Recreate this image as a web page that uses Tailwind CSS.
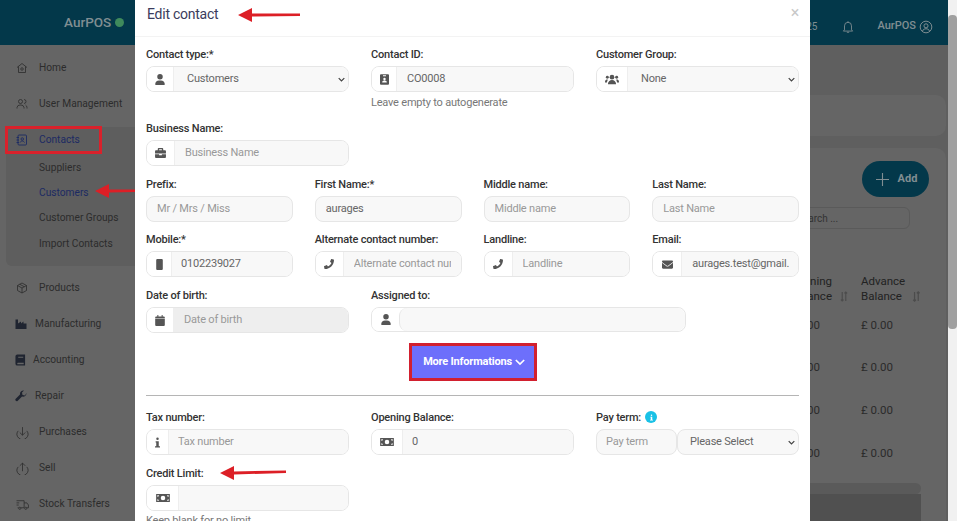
<!DOCTYPE html>
<html>
<head>
<meta charset="utf-8">
<script src="https://cdn.jsdelivr.net/npm/@tailwindcss/browser@4"></script>
</head>
<body class="overflow-hidden">
<div class="relative w-[957px] h-[521px] overflow-hidden bg-[#5f5f5f] text-[#2b2b2b] text-[11px] [font-family:Roboto,sans-serif]">
  <div class="flex h-full">
    <!-- page behind the backdrop -->
    <div class="w-[948px] flex flex-col h-full">
      <header class="h-[45px] shrink-0 bg-[#03384a] flex items-center text-[#808e92]">
        <div class="w-[135px] flex items-center pl-[64px] gap-[4px] text-[13.500px] font-medium">AurPOS<span class="w-[9px] h-[9px] rounded-full bg-[#3f8a5c]"></span></div>
        <div class="flex-1 flex items-center justify-end pt-[8px]">
          <span class="text-[10px] mr-[23px]">25</span>
          <svg viewBox="0 0 24 24" class="w-[14px] h-[14px] mr-[23px] fill-none stroke-[#808e92] stroke-[1.5]"><path d="M6 17V10a6 6 0 0 1 12 0v7l2 2H4zM10 21h4M12 2v2"/></svg>
          <span class="font-medium">AurPOS</span>
          <svg viewBox="0 0 24 24" class="w-[14px] h-[14px] ml-[3px] mr-[15px] fill-none stroke-[#808e92] stroke-[1.7]"><circle cx="12" cy="12" r="10"/><circle cx="12" cy="10" r="3.500"/><path d="M6 19c1-3 3.500-4 6-4s5 1 6 4"/></svg>
        </div>
      </header>
      <div class="flex flex-1 min-h-0">
        <!-- sidebar -->
        <aside class="w-[135px] shrink-0 bg-[#656565] pt-[5px] text-[10.200px] text-[#2c2c2c]">
          <div class="h-[36px] flex items-center pl-[16px] gap-[11px]">
            <svg viewBox="0 0 24 24" class="w-[12px] h-[12px] fill-none stroke-[#2c2c2c] stroke-[1.6]"><path d="M2 11 12 3l10 8M5 9v12h14V9"/><circle cx="12" cy="14" r="2.500"/></svg>Home</div>
          <div class="h-[36px] flex items-center pl-[16px] gap-[11px]">
            <svg viewBox="0 0 24 24" class="w-[12px] h-[12px] fill-none stroke-[#2c2c2c] stroke-[1.6]"><circle cx="9" cy="7" r="4"/><path d="M2 21v-2a6 6 0 0 1 6-5h2a6 6 0 0 1 6 5v2M16 3a4 4 0 0 1 0 8M19 14a6 6 0 0 1 3 5v2"/></svg>User Management</div>
          <div class="relative h-[148px]">
            <div class="absolute left-[6px] right-0 top-[5px] bottom-[4px] rounded-l-[6px] bg-[#5e5e5e]"></div>
            <div class="relative h-[36px] flex items-center pl-[16px] gap-[11px] text-[#1c2a63]">
              <svg viewBox="0 0 24 24" class="w-[12px] h-[12px] fill-none stroke-[#1c2a63] stroke-[1.8]"><rect x="4" y="2" width="17" height="20" rx="2"/><circle cx="12.500" cy="10" r="2.500"/><path d="M8 17c1-2 3-3 4.500-3s3.500 1 4.500 3M1 7h5M1 12h5M1 17h5"/></svg>Contacts</div>
            <div class="relative pl-[39px] flex flex-col">
              <div class="h-[25px] -mt-[3px] flex items-center">Suppliers</div>
              <div class="h-[25px] flex items-center text-[#1c2a63]">Customers</div>
              <div class="h-[26px] flex items-center">Customer Groups</div>
              <div class="h-[25px] flex items-center">Import Contacts</div>
            </div>
          </div>
          <div class="h-[36px] flex items-center pl-[16px] gap-[11px]">
            <svg viewBox="0 0 24 24" class="w-[12px] h-[12px] fill-none stroke-[#2c2c2c] stroke-[1.6]"><path d="M12 2 21 7v10l-9 5-9-5V7zM3 7l9 5 9-5M12 12v10M7.500 4.500l9 5"/></svg>Products</div>
          <div class="h-[36px] flex items-center pl-[15px] gap-[8px]">
            <svg viewBox="0 0 24 24" class="w-[12px] h-[12px] fill-[#1f2430]"><path d="M1 3h5v8l6-4v4l5-4v4h6v11H1z"/></svg>Manufacturing</div>
          <div class="h-[36px] flex items-center pl-[15px] gap-[7px]">
            <svg viewBox="0 0 24 24" class="w-[11px] h-[12px] fill-[#1f2430]"><path d="M5 0h17v24H5a4 4 0 0 1-4-4V4a4 4 0 0 1 4-4zm2 5v2h11V5zm-2 14v2h14v-3H6a1 1 0 0 0-1 1z"/></svg>Accounting</div>
          <div class="h-[36px] flex items-center pl-[15px] gap-[8px]">
            <svg viewBox="0 0 24 24" class="w-[12px] h-[12px] fill-[#1f2430]"><path d="M23 6a7 7 0 0 1-9 7L5 22a3 3 0 0 1-4-4l9-9a7 7 0 0 1 8-8l-4 4 1 5 5 1z"/></svg>Repair</div>
          <div class="h-[36px] flex items-center pl-[16px] gap-[10px]">
            <svg viewBox="0 0 24 24" class="w-[13px] h-[13px] fill-none stroke-[#2c2c2c] stroke-[1.5]"><path d="M12 2v15M7 12l5 5 5-5M4 9a10 10 0 1 0 16 0"/></svg>Purchases</div>
          <div class="h-[36px] flex items-center pl-[16px] gap-[10px]">
            <svg viewBox="0 0 24 24" class="w-[13px] h-[13px] fill-none stroke-[#2c2c2c] stroke-[1.5]"><path d="M12 17V2M7 7l5-5 5 5M4 9a10 10 0 1 0 16 0"/></svg>Sell</div>
          <div class="h-[36px] flex items-center pl-[16px] gap-[10px]">
            <svg viewBox="0 0 24 24" class="w-[13px] h-[13px] fill-none stroke-[#2c2c2c] stroke-[1.4]"><path d="M1 5h14v13H9M1 9h5M1 13h4M15 9h5l3 4v5h-3M3 18h2"/><circle cx="7" cy="19" r="2"/><circle cx="18" cy="19" r="2"/></svg>Stock Transfers</div>
        </aside>
        <!-- main content, right end is what shows past the dialog -->
        <main class="flex-1 min-w-0 flex flex-col pr-[2px] pt-[50px]">
          <div class="shrink-0 h-[41px] rounded-[10px] bg-[#656565]"></div>
          <div class="shrink-0 mt-[12px] rounded-t-[10px] bg-[#656565] h-[400px] flex flex-col items-end pt-[13px]">
            <button class="shrink-0 mr-[17px] w-[67px] h-[36px] rounded-full bg-[#03384a] text-[#808e92] font-bold flex items-center justify-center gap-[9px] pl-[2px]">
              <svg viewBox="0 0 14 14" class="w-[13px] h-[13px] fill-none stroke-[#808e92] stroke-[1.2]"><path d="M7 0v14M0 7h14"/></svg>Add</button>
            <div class="shrink-0 mt-[10px] mr-[36px] w-[300px] h-[22px] rounded-[6px] border border-[#5a5a5a] flex items-center text-[#333] text-[10px] pl-[186px]">Search ...</div>
            <div class="shrink-0 w-[300px] mr-[25px] mt-[45px] text-[11.500px] text-[#222]">
              <div class="grid grid-cols-[1fr_60px] h-[34px] leading-[15px]">
                <div class="flex justify-end items-end pr-[13px] gap-[8px] pb-[4px]">
                  <div class="text-right">Opening<br>Balance</div>
                  <svg viewBox="0 0 9 12" class="w-[8px] h-[11px] mb-[2px] fill-none stroke-[#4c4c4c] stroke-[1.3]"><path d="M2.500 1v10M1 9.500l1.500 1.500L4 9.500M6.500 11V1M5 2.500 6.500 1 8 2.500"/></svg>
                </div>
                <div class="flex items-end gap-[7px] pb-[4px]">
                  <div>Advance<br>Balance</div>
                  <svg viewBox="0 0 9 12" class="w-[9px] h-[11px] mb-[2px] fill-none stroke-[#4c4c4c] stroke-[1.3]"><path d="M2.500 1v10M1 9.500l1.500 1.500L4 9.500M6.500 11V1M5 2.500 6.500 1 8 2.500"/></svg>
                </div>
              </div>
              <div class="grid grid-cols-[1fr_60px] h-[42px] pt-[10px] leading-[14px] text-[#2b2b2b]"><span class="text-right pr-[41px]">£ 0.00</span><span>£ 0.00</span></div>
              <div class="grid grid-cols-[1fr_60px] h-[43px] pt-[10px] leading-[14px] text-[#2b2b2b]"><span class="text-right pr-[41px]">£ 0.00</span><span>£ 0.00</span></div>
              <div class="grid grid-cols-[1fr_60px] h-[43px] pt-[10px] leading-[14px] text-[#2b2b2b]"><span class="text-right pr-[41px]">£ 0.00</span><span>£ 0.00</span></div>
              <div class="grid grid-cols-[1fr_60px] h-[47px] pt-[10px] leading-[14px] text-[#2b2b2b]"><span class="text-right pr-[41px]">£ 0.00</span><span>£ 0.00</span></div>
              <div class="h-[11px] rounded-full bg-[#5a5a5a]"></div>
              <div class="h-[40px] bg-[#505050]"></div>
            </div>
          </div>
        </main>
      </div>
    </div>
    <!-- page scrollbar -->
    <div class="w-[9px] h-full bg-[#f1f1f1] pt-[15px]">
      <div class="h-[314px] rounded-[4px] bg-[#a0a0a0]"></div>
    </div>
  </div>

  <!-- dialog -->
  <div class="absolute left-[135px] top-0 w-[675px] h-full overflow-hidden bg-white text-[#333] tracking-[-0.2px] flex flex-col">
    <div class="h-[37px] shrink-0 border-b border-[#f3f3f3] pl-[12px] pr-[11px] flex items-center justify-between pb-[11px] pt-[4px]">
      <h2 class="text-[14px] tracking-[-0.25px] text-[#3b3b5c]">Edit contact</h2>
      <span class="text-[16px] leading-none text-[#c8c8c8] -mt-[4px]">×</span>
    </div>
    <div class="pl-[11px] pr-[11px] pt-[9px] font-normal">
      <!-- row 1 -->
      <div class="grid grid-cols-3 gap-x-[22px]">
        <div>
          <label class="block h-[16px] mt-[1px] mb-[3px] leading-[16px] font-medium">Contact type:*</label>
          <div class="relative flex h-[26px] rounded-[8px] border border-[#e6e6e6] overflow-hidden">
            <span class="w-[27px] flex items-center justify-center border-r border-[#eee] bg-white">
              <svg viewBox="0 0 448 512" class="w-[10px] h-[11px] fill-[#555]"><path d="M224 256A128 128 0 1 0 224 0a128 128 0 1 0 0 256zm-45.700 48C79.800 304 0 383.800 0 482.300C0 498.700 13.300 512 29.700 512H418.300c16.400 0 29.700-13.300 29.700-29.700C448 383.800 368.200 304 269.700 304H178.300z"/></svg>
            </span>
            <select class="flex-1 min-w-0 appearance-none bg-[#f8f8f8] text-[#666] pl-[13px] text-[11px] outline-none"><option>Customers</option></select>
            <svg viewBox="0 0 10 6" class="absolute right-[3px] top-[10px] w-[7px] h-[5px] fill-none stroke-[#444] stroke-[1.800] pointer-events-none"><path d="M1 1l4 4 4-4"/></svg>
          </div>
        </div>
        <div>
          <label class="block h-[16px] mt-[1px] mb-[3px] leading-[16px] font-medium">Contact ID:</label>
          <div class="flex h-[26px] rounded-[8px] border border-[#e6e6e6] overflow-hidden">
            <span class="w-[25px] flex items-center justify-center border-r border-[#eee] bg-white">
              <svg viewBox="0 0 448 512" class="w-[9px] h-[11px] fill-[#555]"><path fill-rule="evenodd" d="M48 0h352a48 48 0 0 1 48 48v416a48 48 0 0 1-48 48H48a48 48 0 0 1-48-48V48A48 48 0 0 1 48 0zm176 170a60 60 0 1 0 0 120 60 60 0 0 0 0-120zM110 400h228c0-50-40-90-90-90h-48c-50 0-90 40-90 90zM150 50v40h148V50z"/></svg>
            </span>
            <input value="CO0008" class="flex-1 min-w-0 bg-[#f8f8f8] text-[#666] pl-[10px] text-[11px] outline-none">
          </div>
          <p class="mt-[3px] h-[16px] leading-[16px] text-[#777]">Leave empty to autogenerate</p>
        </div>
        <div>
          <label class="block h-[16px] mt-[1px] mb-[3px] leading-[16px] font-medium">Customer Group:</label>
          <div class="relative flex h-[26px] rounded-[8px] border border-[#e6e6e6] overflow-hidden">
            <span class="w-[31px] flex items-center justify-center border-r border-[#eee] bg-white">
              <svg viewBox="0 0 24 18" class="w-[14px] h-[11px] fill-[#555]"><circle cx="12" cy="5" r="4"/><circle cx="4" cy="5" r="2.500"/><circle cx="20" cy="5" r="2.500"/><path d="M5 17c0-4 3-7 7-7s7 3 7 7zM0 13c0-3 2-4 4-4l1 .4C4 11 3.400 13 3.400 14H0zM24 13c0-3-2-4-4-4l-1 .4c1 1.600 1.600 3.600 1.600 4.600H24z"/></svg>
            </span>
            <select class="flex-1 min-w-0 appearance-none bg-[#f8f8f8] text-[#666] pl-[13px] text-[11px] outline-none"><option>None</option></select>
            <svg viewBox="0 0 10 6" class="absolute right-[3px] top-[10px] w-[7px] h-[5px] fill-none stroke-[#444] stroke-[1.800] pointer-events-none"><path d="M1 1l4 4 4-4"/></svg>
          </div>
        </div>
      </div>
      <!-- row 2 -->
      <div class="grid grid-cols-3 gap-x-[22px] mt-[9px]">
        <div>
          <label class="block h-[16px] mt-[1px] mb-[3px] leading-[16px] font-medium">Business Name:</label>
          <div class="flex h-[26px] rounded-[8px] border border-[#e6e6e6] overflow-hidden">
            <span class="w-[28px] flex items-center justify-center border-r border-[#eee] bg-white">
              <svg viewBox="0 0 24 22" class="w-[11px] h-[10px] fill-[#555]"><path d="M8 0h8a2 2 0 0 1 2 2v3h4a2 2 0 0 1 2 2v5H0V7a2 2 0 0 1 2-2h4V2a2 2 0 0 1 2-2zm1 3v2h6V3zM0 14h9v2h6v-2h9v6a2 2 0 0 1-2 2H2a2 2 0 0 1-2-2z"/></svg>
            </span>
            <input placeholder="Business Name" class="flex-1 min-w-0 bg-[#f8f8f8] text-[#666] pl-[10px] text-[11px] outline-none placeholder:text-[#999]">
          </div>
        </div>
      </div>
      <!-- row 3 -->
      <div class="grid grid-cols-4 gap-x-[22px] mt-[10px]">
        <div>
          <label class="block h-[16px] mt-[1px] mb-[3px] leading-[16px] font-medium">Prefix:</label>
          <input placeholder="Mr / Mrs / Miss" class="w-full h-[26px] rounded-[8px] border border-[#e6e6e6] bg-[#f8f8f8] pl-[10px] pb-[1px] text-[11px] outline-none placeholder:text-[#999]">
        </div>
        <div>
          <label class="block h-[16px] mt-[1px] mb-[3px] leading-[16px] font-medium">First Name:*</label>
          <input value="aurages" class="w-full h-[26px] rounded-[8px] border border-[#e6e6e6] bg-[#f8f8f8] text-[#666] pl-[10px] pb-[1px] text-[11px] outline-none">
        </div>
        <div>
          <label class="block h-[16px] mt-[1px] mb-[3px] leading-[16px] font-medium">Middle name:</label>
          <input placeholder="Middle name" class="w-full h-[26px] rounded-[8px] border border-[#e6e6e6] bg-[#f8f8f8] pl-[10px] pb-[1px] text-[11px] outline-none placeholder:text-[#999]">
        </div>
        <div>
          <label class="block h-[16px] mt-[1px] mb-[3px] leading-[16px] font-medium">Last Name:</label>
          <input placeholder="Last Name" class="w-full h-[26px] rounded-[8px] border border-[#e6e6e6] bg-[#f8f8f8] pl-[10px] pb-[1px] text-[11px] outline-none placeholder:text-[#999]">
        </div>
      </div>
      <!-- row 4 -->
      <div class="grid grid-cols-4 gap-x-[22px] mt-[9px]">
        <div>
          <label class="block h-[16px] mt-[1px] mb-[3px] leading-[16px] font-medium">Mobile:*</label>
          <div class="flex h-[26px] rounded-[8px] border border-[#e6e6e6] overflow-hidden">
            <span class="w-[25px] flex items-center justify-center border-r border-[#eee] bg-white">
              <svg viewBox="0 0 12 20" class="w-[7px] h-[11px] fill-[#555]"><path d="M2 0h8a2 2 0 0 1 2 2v16a2 2 0 0 1-2 2H2a2 2 0 0 1-2-2V2a2 2 0 0 1 2-2z"/></svg>
            </span>
            <input value="0102239027" class="flex-1 min-w-0 bg-[#f8f8f8] text-[#666] pl-[9px] text-[11px] outline-none">
          </div>
        </div>
        <div>
          <label class="block h-[16px] mt-[1px] mb-[3px] leading-[16px] font-medium">Alternate contact number:</label>
          <div class="flex h-[26px] rounded-[8px] border border-[#e6e6e6] overflow-hidden">
            <span class="w-[28px] flex items-center justify-center border-r border-[#eee] bg-white">
              <svg viewBox="0 0 512 512" class="w-[10px] h-[10px] fill-[#555]"><path d="M493.400 24.600l-104-24c-11.300-2.600-22.900 3.300-27.500 13.900l-48 112c-4.200 9.800-1.400 21.300 6.900 28l60.600 49.600c-36 76.700-98.900 140.500-177.200 177.200l-49.600-60.600c-6.800-8.300-18.200-11.100-28-6.900l-112 48C3.900 366.500-2 378.100.6 389.400l24 104C27.100 504.200 36.700 512 48 512c256.100 0 464-207.500 464-464 0-11.200-7.700-20.900-18.600-23.400z"/></svg>
            </span>
            <input placeholder="Alternate contact number" class="flex-1 min-w-0 bg-[#f8f8f8] pl-[10px] pr-[10px] text-[11px] outline-none placeholder:text-[#999]">
          </div>
        </div>
        <div>
          <label class="block h-[16px] mt-[1px] mb-[3px] leading-[16px] font-medium">Landline:</label>
          <div class="flex h-[26px] rounded-[8px] border border-[#e6e6e6] overflow-hidden">
            <span class="w-[28px] flex items-center justify-center border-r border-[#eee] bg-white">
              <svg viewBox="0 0 512 512" class="w-[10px] h-[10px] fill-[#555]"><path d="M493.400 24.600l-104-24c-11.300-2.600-22.900 3.300-27.500 13.900l-48 112c-4.200 9.800-1.400 21.300 6.900 28l60.600 49.600c-36 76.700-98.900 140.500-177.200 177.200l-49.600-60.600c-6.800-8.300-18.200-11.100-28-6.900l-112 48C3.900 366.500-2 378.100.6 389.400l24 104C27.100 504.200 36.700 512 48 512c256.100 0 464-207.500 464-464 0-11.200-7.700-20.900-18.600-23.400z"/></svg>
            </span>
            <input placeholder="Landline" class="flex-1 min-w-0 bg-[#f8f8f8] pl-[10px] text-[11px] outline-none placeholder:text-[#999]">
          </div>
        </div>
        <div>
          <label class="block h-[16px] mt-[1px] mb-[3px] leading-[16px] font-medium">Email:</label>
          <div class="flex h-[26px] rounded-[8px] border border-[#e6e6e6] overflow-hidden">
            <span class="w-[29px] flex items-center justify-center border-r border-[#eee] bg-white">
              <svg viewBox="0 0 512 512" class="w-[11px] h-[11px] fill-[#555]"><path d="M502.300 190.800c3.900-3.100 9.700-.2 9.700 4.700V400c0 26.500-21.500 48-48 48H48c-26.500 0-48-21.500-48-48V195.600c0-5 5.700-7.800 9.700-4.700 22.400 17.400 52.100 39.500 154.100 113.600 21.100 15.400 56.700 47.800 92.200 47.600 35.700.3 72-32.800 92.300-47.600 102-74.100 131.600-96.300 154-113.700zM256 320c23.200.4 56.600-29.200 73.400-41.400 132.700-96.300 142.800-104.700 173.400-128.700 5.800-4.500 9.200-11.500 9.200-18.900v-19c0-26.500-21.500-48-48-48H48C21.500 64 0 85.500 0 112v19c0 7.400 3.400 14.300 9.200 18.900 30.600 23.900 40.700 32.400 173.400 128.700 16.800 12.200 50.200 41.800 73.400 41.400z"/></svg>
            </span>
            <input value="aurages.test@gmail.com" class="flex-1 min-w-0 bg-[#f8f8f8] text-[#666] pl-[10px] pr-[9px] text-[11px] outline-none">
          </div>
        </div>
      </div>
      <!-- row 5 -->
      <div class="grid grid-cols-3 gap-x-[22px] mt-[10px]">
        <div>
          <label class="block h-[16px] mt-[1px] mb-[3px] leading-[16px] font-medium">Date of birth:</label>
          <div class="flex h-[26px] rounded-[8px] border border-[#e6e6e6] overflow-hidden">
            <span class="w-[27px] flex items-center justify-center border-r border-[#eee] bg-white">
              <svg viewBox="0 0 448 512" class="w-[10px] h-[11px] fill-[#555]"><path d="M100 0h48v64h152V0h48v64h52a48 48 0 0 1 48 48v48H0v-48a48 48 0 0 1 48-48h52zM0 190h448v274a48 48 0 0 1-48 48H48a48 48 0 0 1-48-48z"/></svg>
            </span>
            <input disabled placeholder="Date of birth" class="flex-1 min-w-0 bg-[#eeeeee] pl-[10px] text-[11px] outline-none placeholder:text-[#999]">
          </div>
        </div>
        <div class="col-span-2">
          <label class="block h-[16px] mt-[1px] mb-[3px] leading-[16px] font-medium">Assigned to:</label>
          <div class="flex h-[25px] w-[315px] rounded-[8px] border border-[#e6e6e6] overflow-hidden">
            <span class="w-[27px] flex items-center justify-center bg-white">
              <svg viewBox="0 0 448 512" class="w-[10px] h-[11px] fill-[#555]"><path d="M224 256A128 128 0 1 0 224 0a128 128 0 1 0 0 256zm-45.700 48C79.800 304 0 383.800 0 482.300C0 498.700 13.300 512 29.700 512H418.300c16.400 0 29.700-13.300 29.700-29.700C448 383.800 368.200 304 269.700 304H178.300z"/></svg>
            </span>
            <div class="flex-1 rounded-[8px] border-l border-[#e6e6e6] bg-[#f8f8f8]"></div>
          </div>
        </div>
      </div>
      <!-- more button -->
      <div class="flex justify-center mt-[10px] pl-[1px]">
        <button class="w-[128px] h-[38px] border-[3px] border-[#d2202f] bg-[#6d6ffb] text-white font-bold flex items-center justify-center gap-[3px] pl-[2px] tracking-[-0.2px]">More Informations
          <svg viewBox="0 0 12 8" class="w-[10px] h-[7px] fill-none stroke-white stroke-[2]"><path d="M1 1l5 5 5-5"/></svg>
        </button>
      </div>
      <hr class="mt-[14px] border-t-[1.5px] border-[#b5b5b5]">
      <!-- row 6 -->
      <div class="grid grid-cols-3 gap-x-[22px] mt-[13px]">
        <div>
          <label class="block h-[16px] mt-[1px] mb-[3px] leading-[16px] font-medium">Tax number:</label>
          <div class="flex h-[26px] rounded-[8px] border border-[#e6e6e6] overflow-hidden">
            <span class="w-[22px] flex items-center justify-center border-r border-[#eee] bg-white">
              <svg viewBox="0 0 8 16" class="w-[5px] h-[11px] fill-[#555]"><circle cx="4" cy="2" r="2"/><path d="M1 6h5v8h2v2H0v-2h2V8H1z"/></svg>
            </span>
            <input placeholder="Tax number" class="flex-1 min-w-0 bg-[#f8f8f8] pl-[9px] text-[11px] outline-none placeholder:text-[#999]">
          </div>
        </div>
        <div>
          <label class="block h-[16px] mt-[1px] mb-[3px] leading-[16px] font-medium">Opening Balance:</label>
          <div class="flex h-[26px] rounded-[8px] border border-[#e6e6e6] overflow-hidden">
            <span class="w-[31px] flex items-center justify-center border-r border-[#eee] bg-white">
              <svg viewBox="0 0 24 14" class="w-[14px] h-[8px] fill-[#555]"><path fill-rule="evenodd" d="M0 0h24v14H0zm12 3a4 4 0 1 0 0 8 4 4 0 0 0 0-8zM2 2v3a3 3 0 0 0 3-3zm17 0a3 3 0 0 0 3 3V2zM2 9v3h3a3 3 0 0 0-3-3zm20 0a3 3 0 0 0-3 3h3z"/></svg>
            </span>
            <input value="0" class="flex-1 min-w-0 bg-[#f8f8f8] text-[#666] pl-[9px] text-[11px] outline-none">
          </div>
        </div>
        <div>
          <label class="flex items-center gap-[4px] h-[16px] mt-[1px] mb-[3px] font-medium">Pay term:
            <span class="w-[12px] h-[12px] -mt-[2px] rounded-full bg-[#19c1e6] flex items-center justify-center">
              <svg viewBox="0 0 8 16" class="w-[3px] h-[7px] fill-white"><circle cx="4" cy="2" r="2"/><path d="M1 6h5v8h2v2H0v-2h2V8H1z"/></svg>
            </span>
          </label>
          <div class="relative flex h-[26px]">
            <input placeholder="Pay term" class="w-[81px] min-w-0 rounded-[8px] border border-[#e6e6e6] bg-[#f8f8f8] pl-[9px] text-[11px] outline-none placeholder:text-[#999]">
            <select class="flex-1 min-w-0 appearance-none rounded-[8px] border border-[#e6e6e6] bg-[#f8f8f8] text-[#666] pl-[12px] text-[11px] outline-none"><option>Please Select</option></select>
            <svg viewBox="0 0 10 6" class="absolute right-[4px] top-[11px] w-[7px] h-[5px] fill-none stroke-[#444] stroke-[1.800] pointer-events-none"><path d="M1 1l4 4 4-4"/></svg>
          </div>
        </div>
      </div>
      <!-- row 7 -->
      <div class="grid grid-cols-3 gap-x-[22px] mt-[10px]">
        <div>
          <label class="block h-[16px] mt-[1px] mb-[3px] leading-[16px] font-medium">Credit Limit:</label>
          <div class="flex h-[26px] rounded-[8px] border border-[#e6e6e6] overflow-hidden">
            <span class="w-[32px] flex items-center justify-center border-r border-[#eee] bg-white">
              <svg viewBox="0 0 24 14" class="w-[14px] h-[8px] fill-[#555]"><path fill-rule="evenodd" d="M0 0h24v14H0zm12 3a4 4 0 1 0 0 8 4 4 0 0 0 0-8zM2 2v3a3 3 0 0 0 3-3zm17 0a3 3 0 0 0 3 3V2zM2 9v3h3a3 3 0 0 0-3-3zm20 0a3 3 0 0 0-3 3h3z"/></svg>
            </span>
            <input class="flex-1 min-w-0 bg-[#f8f8f8] text-[#666] pl-[9px] text-[11px] outline-none">
          </div>
          <p class="mt-[2px] h-[16px] leading-[16px] text-[#777]">Keep blank for no limit</p>
        </div>
      </div>
    </div>
  </div>

  <!-- screenshot annotations -->
  <div class="absolute left-[5px] top-[126px] w-[97px] h-[28px] border-[3px] border-[#d9212b]"></div>
  <svg viewBox="0 0 62 14" class="absolute left-[238px] top-[8px] w-[62px] h-[14px] fill-[#dc1f26]"><path d="M0 7 14 0v5.500L62 5.500v2.500L14 8.500V14z"/></svg>
  <svg viewBox="0 0 40 14" class="absolute left-[95px] top-[184px] w-[40px] h-[14px] fill-[#dc1f26]"><path d="M0 7 14 0v5.500L40 5.500v2.500L14 8.500V14z"/></svg>
  <svg viewBox="0 0 66 14" class="absolute left-[220px] top-[466px] w-[66px] h-[14px] fill-[#dc1f26]"><path d="M0 7 14 0v5.500L66 4.500v2.500L14 8.500V14z"/></svg>
</div>
</body>
</html>
